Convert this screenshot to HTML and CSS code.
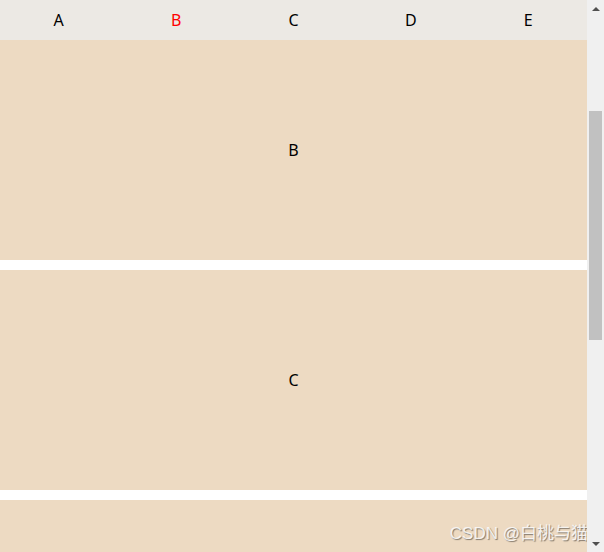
FILE: index.html
```html
<!doctype html>
<html lang="en">
<head>
  <meta charset="utf-8" />
  <meta name="viewport" content="width=device-width,initial-scale=1" />
  <title>Tabs scroll demo</title>
  <link rel="stylesheet" href="styles.css">
</head>
<body>
  <div class="frame">
    <div class="page">
      <!-- top nav -->
      <nav class="nav">
        <a class="navItem">A</a>
        <a class="navItem active">B</a>
        <a class="navItem">C</a>
        <a class="navItem">D</a>
        <a class="navItem">E</a>
      </nav>

      <div class="sections">
        <section class="block">B</section>
        <section class="block">C</section>
        <section class="block"></section>
      </div>

      <div class="watermark">CSDN @白桃与猫</div>
    </div>

    <!-- fake scrollbar -->
    <div class="scrollbar" aria-hidden="true">
      <div class="arrow up"></div>
      <div class="track"><div class="thumb"></div></div>
      <div class="arrow down"></div>
    </div>
  </div>
</body>
</html>
```

FILE: styles.css
```css
:root{
  --font: "Noto Sans", "Liberation Sans", "Noto Sans CJK SC", sans-serif;
  --navBg: #ece9e4;
  --blockBg: #eddac2;
}

*{ box-sizing:border-box }
html, body{ margin:0; height:100%; overflow:hidden; }
body{ font-family:var(--font); background:#fff; }

.frame{
  display:flex;
  height:552px;
}
.page{
  flex:1;
  position:relative;
  overflow:hidden;
}

.nav{
  display:grid;
  grid-template-columns: repeat(5, 1fr);
  height:40px;
  background: var(--navBg);
}
.navItem{
  display:flex;
  align-items:center;
  justify-content:center;
  font-size:16px;
  color:#000;
  cursor:pointer;
}
.navItem.active{ color:#f00; }

.sections{
  display:flex;
  flex-direction:column;
  gap:10px;
}
.block{
  height:220px;
  flex-shrink:0;
  display:flex;
  align-items:center;
  justify-content:center;
  background: var(--blockBg);
  font-size:16px;
  line-height:1;
  color:#000;
}

.watermark{
  position:absolute;
  right:-1px;
  bottom:8px;
  font-family: "Liberation Sans", "Noto Sans CJK SC", sans-serif;
  font-size:17px;
  color: rgba(250,250,250,.9);
  text-shadow: 1px 1px 1px rgba(0,0,0,.45);
  white-space:nowrap;
}

/* scrollbar imitation */
.scrollbar{
  width:17px;
  flex-shrink:0;
  background:#f0f0f0;
  display:flex;
  flex-direction:column;
}
.arrow{
  height:17px;
  display:flex;
  align-items:center;
  justify-content:center;
}
.arrow::before{
  content:"";
  border-left:4px solid transparent;
  border-right:4px solid transparent;
}
.arrow.up::before{ border-bottom:4px solid #505050; }
.arrow.down::before{ border-top:4px solid #505050; }
.track{
  flex:1;
  padding-top:94px;
}
.thumb{
  margin:0 2px;
  height:229px;
  background:#c1c1c1;
}
```
